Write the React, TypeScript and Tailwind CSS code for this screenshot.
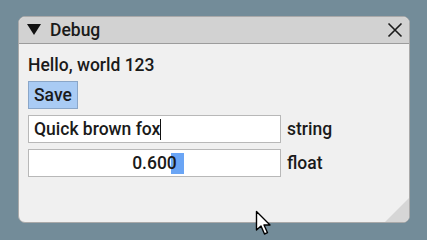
import React from "react";

const font = { fontFamily: "Roboto, 'Noto Sans', sans-serif" };

function CloseIcon() {
  return (
    <svg width="16" height="16" viewBox="0 0 16 16">
      <path d="M1.5 1.5 L14.5 14.5 M14.5 1.5 L1.5 14.5" stroke="#1a1a1a" strokeWidth="1.6" fill="none" />
    </svg>
  );
}

function Cursor() {
  return (
    <svg width="22" height="28" viewBox="0 0 22 28" className="absolute left-[255px] top-[210px]">
      <path
        d="M1.5 1.5 L1.5 20 L6 16 L9.5 24 L12.5 22.7 L9 15 L15 15 Z"
        fill="#ffffff"
        stroke="#000000"
        strokeWidth="1.4"
        strokeLinejoin="round"
      />
    </svg>
  );
}

export default function App() {
  return (
    <div className="relative w-[427px] h-[240px] overflow-hidden bg-[#738c99] pl-[18px] pt-[16px]" style={font}>
      <div className="relative w-[392px] h-[207px] rounded-[7px] border border-[#a9a9a9] bg-[#f0f0f0] overflow-hidden">
        <div className="flex items-center gap-[9px] h-[27px] bg-[#d2d2d2] border-b border-[#9c9c9c] pl-[8px] pr-[6px]">
          <svg width="14" height="12" viewBox="0 0 14 12" className="shrink-0">
            <path d="M0 0 L14 0 L7 11 Z" fill="#111111" />
          </svg>
          <span className="text-[17.5px] leading-[19px] font-medium text-[#1a1a1a]">Debug</span>
          <div className="ml-auto flex items-center">
            <CloseIcon />
          </div>
        </div>

        <div className="flex flex-col gap-[6px] pt-[12px] pl-[9px] text-[17.5px] leading-[19px] font-medium text-[#1a1a1a]">
          <div>Hello, world 123</div>
          <div className="flex">
            <button className="h-[28px] px-[5px] bg-[#a9cbf4] border border-[#8aa6c8] text-[#1a1a1a] font-medium">
              Save
            </button>
          </div>
          <div className="flex items-center gap-[6px]">
            <div className="relative flex items-center w-[253px] h-[28px] bg-white border border-[#b8b8b8] pl-[5px]">
              <span>Quick brown fox</span>
              <span className="w-px h-[21px] bg-[#111111]" />
            </div>
            <span>string</span>
          </div>
          <div className="flex items-center gap-[6px]">
            <div className="relative flex items-center justify-center w-[253px] h-[28px] bg-white border border-[#b8b8b8]">
              <div className="absolute left-[142px] top-[3px] w-[13px] h-[21px] bg-[#6aa5f5]" />
              <span className="relative">0.600</span>
            </div>
            <span>float</span>
          </div>
        </div>

        <svg width="24" height="24" viewBox="0 0 24 24" className="absolute right-0 bottom-0">
          <path d="M24 0 L24 24 L0 24 Z" fill="#d6d6d6" />
        </svg>
      </div>
      <Cursor />
    </div>
  );
}
